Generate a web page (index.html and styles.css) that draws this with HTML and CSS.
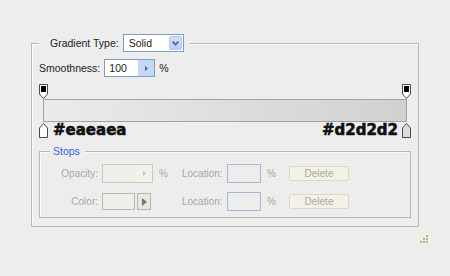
FILE: index.html
```html
<!DOCTYPE html>
<html lang="en">

<head>
    <meta charset="UTF-8">
    <title>Gradient Editor</title>
    <link rel="stylesheet" href="styles.css">
</head>

<body>
    <div class="dialog">
        <fieldset class="group main">
            <legend>
                <div class="title">
                    <span>Gradient Type:</span>
                    <span class="select">
                        <span class="select-value">Solid</span>
                        <span class="select-btn">
                            <svg width="7" height="5" viewBox="0 0 7 5"><path d="M0.6 0.6L3.5 3.6L6.4 0.6" fill="none" stroke="#4d6185" stroke-width="1.7"/></svg>
                        </span>
                    </span>
                </div>
            </legend>

            <!-- Smoothness -->
            <div class="row smooth">
                <span>Smoothness:</span>
                <span class="spin">
                    <span class="spin-value">100</span>
                    <span class="spin-btn">
                        <svg width="3" height="5" viewBox="0 0 3 5"><path d="M0 0L3 2.5L0 5Z" fill="#4d6185"/></svg>
                    </span>
                </span>
                <span>%</span>
            </div>

            <!-- Gradient bar with stops -->
            <div class="editor">
                <div class="marks">
                    <svg width="9" height="15" viewBox="0 0 9 15"><path d="M0.5 0.5H8.5V10L4.5 14.5L0.5 10Z" fill="#fff" stroke="#4a4a4a"/><rect x="2" y="2" width="5" height="6" fill="#000"/></svg>
                    <svg width="9" height="15" viewBox="0 0 9 15"><path d="M0.5 0.5H8.5V10L4.5 14.5L0.5 10Z" fill="#fff" stroke="#4a4a4a"/><rect x="2" y="2" width="5" height="6" fill="#000"/></svg>
                </div>
                <div class="bar"></div>
                <div class="marks colors">
                    <svg width="9" height="15" viewBox="0 0 9 15"><path d="M4.5 0.5L8.5 5V14.5H0.5V5Z" fill="#fafafa" stroke="#4a4a4a"/></svg>
                    <span class="hex">#eaeaea</span>
                    <span class="hex end">#d2d2d2</span>
                    <svg width="9" height="15" viewBox="0 0 9 15"><path d="M4.5 0.5L8.5 5V14.5H0.5V5Z" fill="#dcdcdc" stroke="#4a4a4a"/></svg>
                </div>
            </div>

            <!-- Stops -->
            <fieldset class="group stops">
                <legend>Stops</legend>
                <div class="stop-grid">
                    <span class="label">Opacity:</span>
                    <span class="spin off">
                        <span class="spin-value"></span>
                        <span class="spin-btn">
                            <svg width="3" height="5" viewBox="0 0 3 5"><path d="M0 0L3 2.5L0 5Z" fill="#c8c6ba"/></svg>
                        </span>
                    </span>
                    <span class="unit">%</span>
                    <span>Location:</span>
                    <span class="loc"></span>
                    <span class="unit">%</span>
                    <span class="btn">Delete</span>

                    <span class="label">Color:</span>
                    <span class="color-pick">
                        <span class="swatch"></span>
                        <span class="swatch-btn">
                            <svg width="5" height="8" viewBox="0 0 5 8"><path d="M0 0L5 4L0 8Z" fill="#747470"/></svg>
                        </span>
                    </span>
                    <span></span>
                    <span>Location:</span>
                    <span class="loc"></span>
                    <span class="unit">%</span>
                    <span class="btn">Delete</span>
                </div>
            </fieldset>
        </fieldset>

        <div class="grip-row">
            <svg class="grip" width="14" height="13" viewBox="0 0 14 13">
                <rect width="14" height="13" fill="#f1efdd"/>
                <rect x="10" y="2" width="2" height="2" fill="#b6b3a0"/>
                <rect x="7" y="5" width="2" height="2" fill="#b6b3a0"/>
                <rect x="10" y="5" width="2" height="2" fill="#b6b3a0"/>
                <rect x="4" y="8" width="2" height="2" fill="#b6b3a0"/>
                <rect x="7" y="8" width="2" height="2" fill="#b6b3a0"/>
                <rect x="10" y="8" width="2" height="2" fill="#b6b3a0"/>
            </svg>
        </div>
    </div>
</body>

</html>
```

FILE: styles.css
```css
body {
    margin: 0;
    background: #ededed;
    font-family: "Liberation Sans", Arial, sans-serif;
    font-size: 10px;
    color: #222;
}

.dialog {
    padding: 34px 20px 0 31px;
}

/* Group boxes */
.group {
    margin: 0;
    min-width: 0;
    border: 1px solid #bab8ac;
    box-shadow: inset 1px 1px 0 #fbfbf9;
}

.group > legend {
    background: #ededed;
}

.main {
    width: 388px;
    box-sizing: border-box;
    padding: 7px 7px 8px;
}

.main > legend {
    padding: 0 6px 0 11px;
}

.title {
    display: flex;
    align-items: center;
    gap: 4px;
    height: 18px;
    font-size: 10.5px;
}

.select {
    display: flex;
    align-items: center;
    justify-content: space-between;
    width: 61px;
    height: 18px;
    box-sizing: border-box;
    border: 1px solid #7f9db9;
    background: white;
    padding: 1px;
}

.select-value {
    padding-left: 4px;
}

.select-btn {
    display: flex;
    align-items: center;
    justify-content: center;
    width: 13px;
    height: 14px;
    border: 1px solid #b4c8f2;
    border-radius: 2px;
    background: linear-gradient(#d3e0fd, #b9cdf6);
    box-sizing: border-box;
}

/* Smoothness */
.smooth {
    display: flex;
    align-items: center;
    gap: 4px;
    height: 18px;
    font-size: 10.5px;
}

.spin {
    display: flex;
    width: 51px;
    height: 18px;
    box-sizing: border-box;
    border: 1px solid #7f9db9;
    background: white;
}

.spin-value {
    flex: 1;
    padding-left: 4px;
    line-height: 16px;
}

.spin-btn {
    display: flex;
    align-items: center;
    justify-content: center;
    width: 16px;
    background: #c7d7f8;
}

.spin.off {
    height: 19px;
    border-color: #cac8bb;
    background: #eeeeea;
}

.spin.off .spin-btn {
    background: #f3f2ea;
}

/* Gradient editor */
.editor {
    margin-top: 7px;
}

.marks {
    display: flex;
    justify-content: space-between;
    height: 15px;
}

.bar {
    margin: 0 4px;
    height: 23px;
    box-sizing: border-box;
    border: 1px solid #a2a2a2;
    background: linear-gradient(to right, #ebebeb, #d1d1d1);
}

.colors {
    height: 16px;
    justify-content: flex-start;
}

.colors svg {
    margin-top: 1px;
}

.hex {
    margin-left: 5px;
    font-family: "DejaVu Sans", sans-serif;
    font-weight: bold;
    font-size: 15px;
    line-height: 16px;
    color: #111;
    -webkit-text-stroke: 0.6px #111;
}

.hex.end {
    margin-left: auto;
    margin-right: 4px;
}

/* Stops */
.stops {
    margin-top: 7px;
    padding: 7px 0 6px;
    color: #aaa89e;
}

.stops > legend {
    margin-left: 10px;
    padding: 0 5px 0 3px;
    line-height: 12px;
    font-size: 10.5px;
    color: #3366dd;
}

.stop-grid {
    display: grid;
    grid-template-columns: 62px 54px 26px 45px 37px 25px 60px;
    grid-auto-rows: 19px;
    row-gap: 9px;
    align-items: center;
}

.label {
    text-align: right;
    padding-right: 4px;
}

.unit {
    padding-left: 3px;
}

.loc {
    width: 34px;
    height: 19px;
    box-sizing: border-box;
    border: 1px solid #a3b9d6;
}

.color-pick {
    display: flex;
    gap: 2px;
    height: 17px;
}

.swatch {
    width: 33px;
    box-sizing: border-box;
    border: 1px solid #b8b6a9;
    background: #efefec;
}

.swatch-btn {
    display: flex;
    align-items: center;
    justify-content: center;
    width: 14px;
    box-sizing: border-box;
    border: 1px solid #b8b6a9;
    background: #e9e9e4;
}

.btn {
    height: 15px;
    box-sizing: border-box;
    border: 1px solid #dad8c9;
    border-radius: 2px;
    background: #f3f2e5;
    text-align: center;
    line-height: 13px;
}

.grip-row {
    display: flex;
    justify-content: flex-end;
    margin-top: 6px;
}
```
